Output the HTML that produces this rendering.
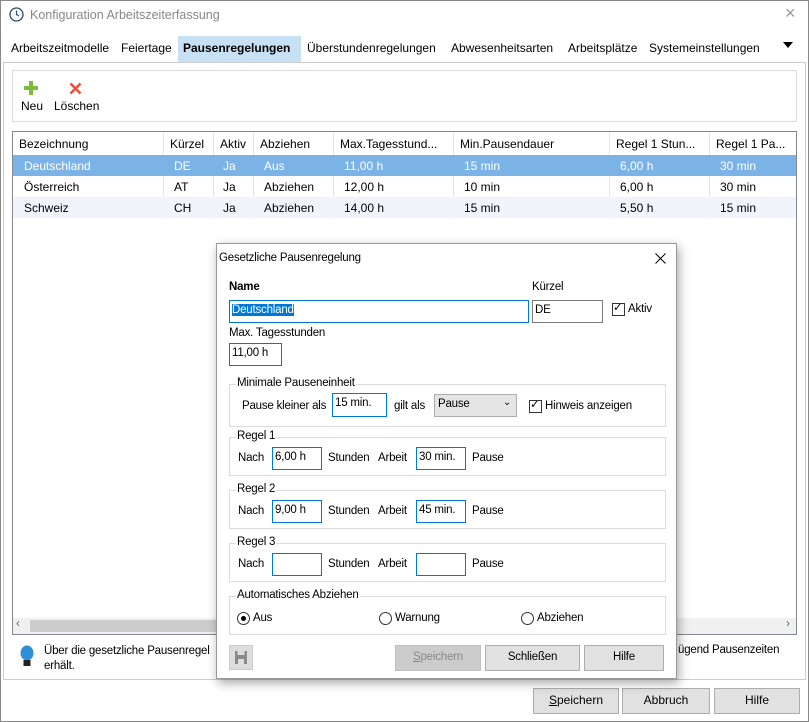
<!DOCTYPE html>
<html><head><meta charset="utf-8"><style>
*{box-sizing:border-box;margin:0;padding:0}
body{width:809px;height:722px;background:#fff;font-family:"Liberation Sans",sans-serif;font-size:12px;color:#000;position:relative;overflow:hidden}
.a{position:absolute;white-space:nowrap}
.d,.d *{font-size:11.5px;letter-spacing:-0.2px}
.box{position:absolute;border:1px solid #dcdcdc}
.inp{position:absolute;border:1px solid #0078d7;background:#fff;padding:3px 2px}
.btn{position:absolute;border:1px solid #adadad;background:#e1e1e1;text-align:center;line-height:23px}
.cb{position:absolute;width:13px;height:13px;border:1px solid #333;background:#fff}
.rd{position:absolute;width:13px;height:13px;border:1px solid #333;border-radius:50%;background:#fff}
.grp{position:absolute;border:1px solid #dcdcdc}
.gl{position:absolute;background:#fff;padding:0 1px;top:-8px;left:6px}
.row{position:absolute;left:13px;width:783px;height:21px}
.c{position:absolute;top:4px}
</style></head><body>
<div class="a" style="left:0;top:0;width:809px;height:722px;border:1px solid #888"></div>
<svg class="a" style="left:9px;top:7px" width="15" height="15"><circle cx="7.5" cy="7.5" r="6.5" fill="none" stroke="#2b4a6e" stroke-width="1.3"/><path d="M7.5 3.5V7.5L10 9" stroke="#2b4a6e" fill="none" stroke-width="1.2"/></svg>
<div class="a" style="left:30px;top:8px;color:#888;font-size:12.5px">Konfiguration Arbeitszeiterfassung</div>
<div class="a" style="left:785px;top:3px;color:#999;font-size:18px">×</div>
<div class="a" style="left:178px;top:36px;width:123px;height:26px;background:#c7e0f4"></div>
<div class="a" style="left:11px;top:41px">Arbeitszeitmodelle</div>
<div class="a" style="left:121px;top:41px">Feiertage</div>
<div class="a" style="left:183px;top:41px;font-weight:bold">Pausenregelungen</div>
<div class="a" style="left:307px;top:41px">Überstundenregelungen</div>
<div class="a" style="left:451px;top:41px">Abwesenheitsarten</div>
<div class="a" style="left:568px;top:41px">Arbeitsplätze</div>
<div class="a" style="left:649px;top:41px">Systemeinstellungen</div>
<div class="a" style="left:783px;top:42px;width:0;height:0;border-left:5px solid transparent;border-right:5px solid transparent;border-top:6px solid #000"></div>
<div class="box" style="left:3px;top:62px;width:803px;height:618px;border-color:#ccc"></div>
<div class="box" style="left:12px;top:70px;width:785px;height:52px"></div>
<svg class="a" style="left:24px;top:81px" width="14" height="14"><path d="M5 0h4v5h5v4H9v5H5V9H0V5h5z" fill="#7dbb3c"/></svg>
<svg class="a" style="left:69px;top:82px" width="13" height="13"><path d="M1.5 1.5L11.5 11.5M11.5 1.5L1.5 11.5" stroke="#e8503c" stroke-width="2.5"/></svg>
<div class="a" style="left:21px;top:99px">Neu</div>
<div class="a" style="left:54px;top:99px">Löschen</div>
<div class="box" style="left:12px;top:131px;width:785px;height:504px;border-color:#828790"></div>
<div class="row" style="top:133px"><span class="c" style="left:6px">Bezeichnung</span><span class="c" style="left:157px">Kürzel</span><span class="c" style="left:207px">Aktiv</span><span class="c" style="left:247px">Abziehen</span><span class="c" style="left:327px">Max.Tagesstund...</span><span class="c" style="left:447px">Min.Pausendauer</span><span class="c" style="left:603px">Regel 1 Stun...</span><span class="c" style="left:703px">Regel 1 Pa...</span></div>
<div class="a" style="left:163px;top:132px;width:1px;height:87px;background:#e5e5e5"></div>
<div class="a" style="left:213px;top:132px;width:1px;height:87px;background:#e5e5e5"></div>
<div class="a" style="left:253px;top:132px;width:1px;height:87px;background:#e5e5e5"></div>
<div class="a" style="left:333px;top:132px;width:1px;height:87px;background:#e5e5e5"></div>
<div class="a" style="left:453px;top:132px;width:1px;height:87px;background:#e5e5e5"></div>
<div class="a" style="left:609px;top:132px;width:1px;height:87px;background:#e5e5e5"></div>
<div class="a" style="left:709px;top:132px;width:1px;height:87px;background:#e5e5e5"></div>
<div class="row" style="top:155px;background:#7cb3e6;color:#fff"><span class="c" style="left:11px">Deutschland</span><span class="c" style="left:161px">DE</span><span class="c" style="left:210px">Ja</span><span class="c" style="left:251px">Aus</span><span class="c" style="left:331px">11,00 h</span><span class="c" style="left:451px">15 min</span><span class="c" style="left:607px">6,00 h</span><span class="c" style="left:707px">30 min</span></div>
<div class="row" style="top:176px"><span class="c" style="left:11px">Österreich</span><span class="c" style="left:161px">AT</span><span class="c" style="left:210px">Ja</span><span class="c" style="left:251px">Abziehen</span><span class="c" style="left:331px">12,00 h</span><span class="c" style="left:451px">10 min</span><span class="c" style="left:607px">6,00 h</span><span class="c" style="left:707px">30 min</span></div>
<div class="row" style="top:197px;background:#f1f5fb"><span class="c" style="left:11px">Schweiz</span><span class="c" style="left:161px">CH</span><span class="c" style="left:210px">Ja</span><span class="c" style="left:251px">Abziehen</span><span class="c" style="left:331px">14,00 h</span><span class="c" style="left:451px">15 min</span><span class="c" style="left:607px">5,50 h</span><span class="c" style="left:707px">15 min</span></div>
<div class="a" style="left:13px;top:618px;width:783px;height:16px;background:#f0f0f0"></div>
<div class="a" style="left:30px;top:620px;width:400px;height:12px;background:#cdcdcd"></div>
<div class="a" style="left:16px;top:616px;color:#666">‹</div>
<div class="a" style="left:786px;top:616px;color:#666">›</div>
<svg class="a" style="left:20px;top:645px" width="14" height="24"><ellipse cx="7" cy="8" rx="6.5" ry="7.5" fill="#2e8fd8"/><rect x="3.5" y="15" width="7" height="6" fill="#222"/></svg>
<div class="a d" style="left:44px;top:644px;line-height:15px">Über die gesetzliche Pausenregel<br>erhält.</div>
<div class="a d" style="left:678px;top:644px">ügend Pausenzeiten</div>
<div class="btn" style="left:533px;top:688px;width:86px;height:26px"><u>S</u>peichern</div>
<div class="btn" style="left:622px;top:688px;width:88px;height:26px">Abbruch</div>
<div class="btn" style="left:714px;top:688px;width:86px;height:26px">Hilfe</div>

<div class="d">
<div class="a" style="left:216px;top:243px;width:461px;height:436px;background:#fff;border:1px solid #999;box-shadow:2px 4px 10px rgba(0,0,0,.35)"></div>
<div class="a" style="left:219px;top:252px">Gesetzliche Pausenregelung</div>
<svg class="a" style="left:655px;top:253px" width="11" height="11"><path d="M.5 .5L10.5 10.5M10.5 .5L.5 10.5" stroke="#000"/></svg>
<div class="a" style="left:229px;top:281px;font-weight:bold">Name</div>
<div class="a" style="left:532px;top:281px">Kürzel</div>
<div class="inp" style="left:229px;top:300px;width:300px;height:23px"><span style="background:#0078d7;color:#fff">Deutschland</span></div>
<div class="inp" style="left:532px;top:300px;width:71px;height:23px;border-color:#7a7a7a">DE</div>
<div class="cb" style="left:612px;top:303px"></div><div class="a" style="left:613px;top:300px">✓</div>
<div class="a" style="left:628px;top:303px">Aktiv</div>
<div class="a" style="left:229px;top:327px">Max. Tagesstunden</div>
<div class="inp" style="left:229px;top:343px;width:53px;height:23px">11,00 h</div>
<div class="grp" style="left:229px;top:384px;width:437px;height:43px"><span class="gl">Minimale Pauseneinheit</span></div>
<div class="a" style="left:242px;top:400px">Pause kleiner als</div>
<div class="inp" style="left:332px;top:393px;width:55px;height:24px">15 min.</div>
<div class="a" style="left:394px;top:400px">gilt als</div>
<div class="a" style="left:434px;top:394px;width:83px;height:23px;background:#e5e5e5;border:1px solid #adadad;padding:3px 3px">Pause<span style="position:absolute;right:5px;top:2px;font-size:10px">⌄</span></div>
<div class="cb" style="left:529px;top:400px"></div><div class="a" style="left:530px;top:397px">✓</div>
<div class="a" style="left:545px;top:400px">Hinweis anzeigen</div>
<div class="grp" style="left:229px;top:437px;width:437px;height:39px"><span class="gl">Regel 1</span></div>
<div class="grp" style="left:229px;top:490px;width:437px;height:39px"><span class="gl">Regel 2</span></div>
<div class="grp" style="left:229px;top:543px;width:437px;height:39px"><span class="gl">Regel 3</span></div>
<div class="a" style="left:238px;top:452px">Nach</div><div class="inp" style="left:272px;top:447px;width:50px;height:23px">6,00 h</div><div class="a" style="left:328px;top:452px">Stunden</div><div class="a" style="left:378px;top:452px">Arbeit</div><div class="inp" style="left:416px;top:447px;width:50px;height:23px">30 min.</div><div class="a" style="left:472px;top:452px">Pause</div>
<div class="a" style="left:238px;top:505px">Nach</div><div class="inp" style="left:272px;top:500px;width:50px;height:23px">9,00 h</div><div class="a" style="left:328px;top:505px">Stunden</div><div class="a" style="left:378px;top:505px">Arbeit</div><div class="inp" style="left:416px;top:500px;width:50px;height:23px">45 min.</div><div class="a" style="left:472px;top:505px">Pause</div>
<div class="a" style="left:238px;top:558px">Nach</div><div class="inp" style="left:272px;top:553px;width:50px;height:23px"></div><div class="a" style="left:328px;top:558px">Stunden</div><div class="a" style="left:378px;top:558px">Arbeit</div><div class="inp" style="left:416px;top:553px;width:50px;height:23px"></div><div class="a" style="left:472px;top:558px">Pause</div>
<div class="grp" style="left:229px;top:596px;width:437px;height:39px"><span class="gl">Automatisches Abziehen</span></div>
<div class="rd" style="left:237px;top:612px"></div><div class="a" style="left:241px;top:616px;width:5px;height:5px;border-radius:50%;background:#000"></div><div class="a" style="left:253px;top:612px">Aus</div>
<div class="rd" style="left:379px;top:612px"></div><div class="a" style="left:395px;top:612px">Warnung</div>
<div class="rd" style="left:521px;top:612px"></div><div class="a" style="left:537px;top:612px">Abziehen</div>
<div class="a" style="left:229px;top:645px;width:24px;height:25px;background:#ddd;border:1px solid #ccc"></div>
<svg class="a" style="left:235px;top:651px" width="12" height="13"><path d="M0 0h12v13H0z M2.5 0v4h7V0 M3 8h6v5H3z" fill="#8a8a8a" fill-rule="evenodd"/></svg>
<div class="btn" style="left:395px;top:645px;width:86px;height:26px;background:#ccc;border-color:#bfbfbf;color:#888"><u>S</u>peichern</div>
<div class="btn" style="left:485px;top:645px;width:95px;height:26px">Schließen</div>
<div class="btn" style="left:584px;top:645px;width:80px;height:26px">Hilfe</div>
</div>
</body></html>
